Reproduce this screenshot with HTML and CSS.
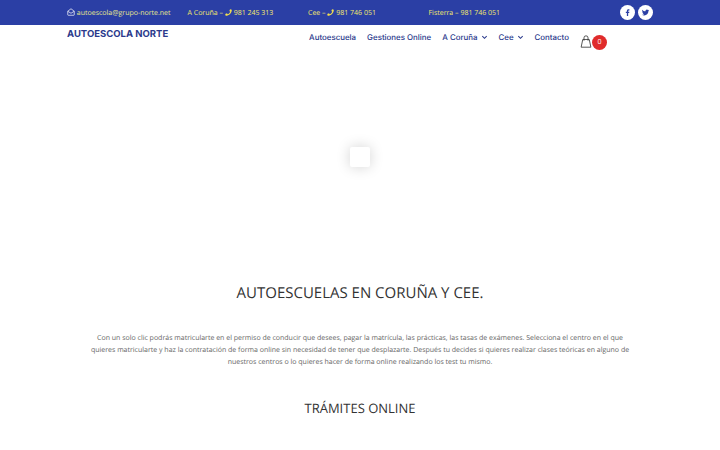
FILE: index.html
```html
<!DOCTYPE html>
<html lang="es">

<head>
  <meta charset="UTF-8">
  <meta name="viewport" content="width=device-width, initial-scale=1.0">
  <title>Autoescola Norte</title>
  <link rel="stylesheet" href="styles.css">
</head>

<body>
  <div class="topbar">
    <div class="topbar-inner">
      <span class="top-item">
        <svg class="icon-mail" viewBox="0 0 16 16"><path d="M1.500 6.500 8 1.500l6.500 5v7a1 1 0 0 1-1 1h-11a1 1 0 0 1-1-1z M1.500 6.500 8 10.500l6.500-4" fill="none" stroke="#fff" stroke-width="1.400" stroke-linejoin="round"/></svg>
        autoescola@grupo-norte.net
      </span>
      <span class="top-item">A Coruña –
        <svg class="icon-phone" viewBox="0 0 16 16"><path d="M11.500 0.500 15.500 1.500c.3 7-6 14-14 14L.5 11.500l4-1.700 1.700 2.200c2.500-1.100 4.800-3.400 5.900-5.900L10 4.500z" fill="#f4e04d"/></svg>
        981 245 313</span>
      <span class="top-item">Cee –
        <svg class="icon-phone" viewBox="0 0 16 16"><path d="M11.500 0.500 15.500 1.500c.3 7-6 14-14 14L.5 11.500l4-1.700 1.700 2.200c2.500-1.100 4.800-3.400 5.900-5.900L10 4.500z" fill="#f4e04d"/></svg>
        981 746 051</span>
      <span class="top-item">Fisterra – 981 746 051</span>
      <div class="social">
        <span class="social-btn">
          <svg viewBox="0 0 16 16"><path d="M9.200 14V8.700h1.800l.3-2.100H9.200V5.300c0-.6.200-1 1-1h1.200V2.400c-.2 0-.9-.1-1.700-.1-1.700 0-2.800 1-2.800 2.900v1.400H5v2.100h1.900V14z" fill="#2b3fa5"/></svg>
        </span>
        <span class="social-btn">
          <svg viewBox="0 0 16 16"><path d="M14.500 3.900c-.5.200-1 .4-1.500.4.500-.3 1-.8 1.200-1.400-.5.300-1.100.5-1.700.6a2.700 2.700 0 0 0-4.600 2.400C5.700 5.800 3.700 4.800 2.400 3.100c-.7 1.200-.4 2.800.8 3.600-.4 0-.8-.1-1.200-.3 0 1.300.9 2.400 2.100 2.700-.4.100-.8.100-1.200 0 .3 1.100 1.300 1.800 2.500 1.900A5.400 5.400 0 0 1 1.500 12c1.200.8 2.600 1.200 4.100 1.200 5 0 7.800-4.200 7.600-7.900.5-.4 1-.9 1.300-1.400z" fill="#2b3fa5"/></svg>
        </span>
      </div>
    </div>
  </div>

  <header class="navbar">
    <div class="navbar-inner">
      <a class="logo">AUTOESCOLA NORTE</a>
      <nav class="menu">
        <a>Autoescuela</a>
        <a>Gestiones Online</a>
        <a>A Coruña <svg class="chev" viewBox="0 0 8 8"><path d="M1.500 2.500 4 5 6.500 2.500" fill="none" stroke="#2b3a8c" stroke-width="1.200"/></svg></a>
        <a>Cee <svg class="chev" viewBox="0 0 8 8"><path d="M1.500 2.500 4 5 6.500 2.500" fill="none" stroke="#2b3a8c" stroke-width="1.200"/></svg></a>
        <a>Contacto</a>
      </nav>
      <div class="cart">
        <svg class="bag" viewBox="0 0 14 16"><path d="M3 5.500h8l2 9.500H1z M4.500 7V3.500a2.500 2.500 0 0 1 5 0V7" fill="none" stroke="#333" stroke-width="1"/></svg>
        <span class="cart-count">0</span>
      </div>
    </div>
  </header>

  <div class="hero">
    <div class="loader"></div>
  </div>

  <main class="content">
    <h1>AUTOESCUELAS EN CORUÑA Y CEE.</h1>
    <p>Con un solo clic podrás matricularte en el permiso de conducir que desees, pagar la matrícula, las prácticas, las tasas de exámenes. Selecciona el centro en el que quieres matricularte y haz la contratación de forma online sin necesidad de tener que desplazarte. Después tu decides si quieres realizar clases teóricas en alguno de nuestros centros o lo quieres hacer de forma online realizando los test tu mismo.</p>
    <h2>TRÁMITES ONLINE</h2>
  </main>
</body>

</html>
```

FILE: styles.css
```css
* {
  padding: 0;
  margin: 0;
  box-sizing: border-box;
}

html,
body {
  height: 450px;
  overflow: hidden;
}

body {
  background-color: #fff;
  font-family: "Open Sans", "Liberation Sans", sans-serif;
  color: #333;
  text-rendering: geometricPrecision;
}

.topbar {
  height: 25px;
  background-color: #2b3fa5;
}

.topbar-inner {
  width: 586px;
  height: 25px;
  margin-left: 67px;
  display: flex;
  align-items: center;
}

.top-item {
  width: 120.5px;
  padding-top: 2px;
  font-size: 7px;
  line-height: 10px;
  color: #f4e96a;
  white-space: nowrap;
}

.top-item:first-child {
  color: #e8e88c;
}

.top-item svg {
  vertical-align: -1px;
}

.icon-mail {
  width: 8px;
  height: 8px;
}

.icon-phone {
  width: 7px;
  height: 7px;
}

.social {
  margin-left: auto;
  display: flex;
  gap: 3px;
}

.social-btn {
  width: 15px;
  height: 15px;
  border-radius: 50%;
  background-color: #fff;
  display: flex;
  align-items: center;
  justify-content: center;
}

.social-btn svg {
  width: 9px;
  height: 9px;
}

.navbar {
  height: 28px;
}

.navbar-inner {
  width: 540px;
  margin-left: 67px;
  display: flex;
  align-items: flex-start;
}

.logo {
  font-family: Inter, "Liberation Sans", sans-serif;
  font-size: 9.500px;
  font-weight: 700;
  line-height: 20px;
  color: #2b3a8c;
}

.menu {
  margin-left: auto;
  display: flex;
  gap: 11px;
  padding-top: 5px;
}

.menu a {
  font-family: Inter, "Liberation Sans", sans-serif;
  font-size: 7.900px;
  font-weight: 500;
  line-height: 14px;
  color: #2b3a8c;
  display: flex;
  align-items: center;
  gap: 3px;
}

.chev {
  width: 7px;
  height: 7px;
}

.cart {
  position: relative;
  width: 27px;
  margin-left: 11px;
  padding-top: 10px;
}

.bag {
  display: block;
  width: 12px;
  height: 13px;
}

.cart-count {
  position: absolute;
  left: 12px;
  top: 10px;
  width: 15px;
  height: 15px;
  border-radius: 50%;
  background-color: #e02b2b;
  color: #fff;
  font-size: 7px;
  line-height: 15px;
  text-align: center;
}

.hero {
  height: 229px;
  padding-top: 94px;
  display: flex;
  justify-content: center;
}

.loader {
  width: 20px;
  height: 20px;
  background-color: #fff;
  border-radius: 2px;
  box-shadow: 0 0 14px rgba(0, 0, 0, 0.18);
}

.content {
  text-align: center;
}

.content h1 {
  font-size: 15px;
  font-weight: 400;
  line-height: 22px;
  color: #333;
}

.content p {
  width: 540px;
  margin: 29px auto 0;
  font-size: 7px;
  line-height: 12px;
  color: #666;
}

.content h2 {
  margin-top: 29px;
  font-size: 13px;
  font-weight: 400;
  line-height: 20px;
  color: #333;
}
```
